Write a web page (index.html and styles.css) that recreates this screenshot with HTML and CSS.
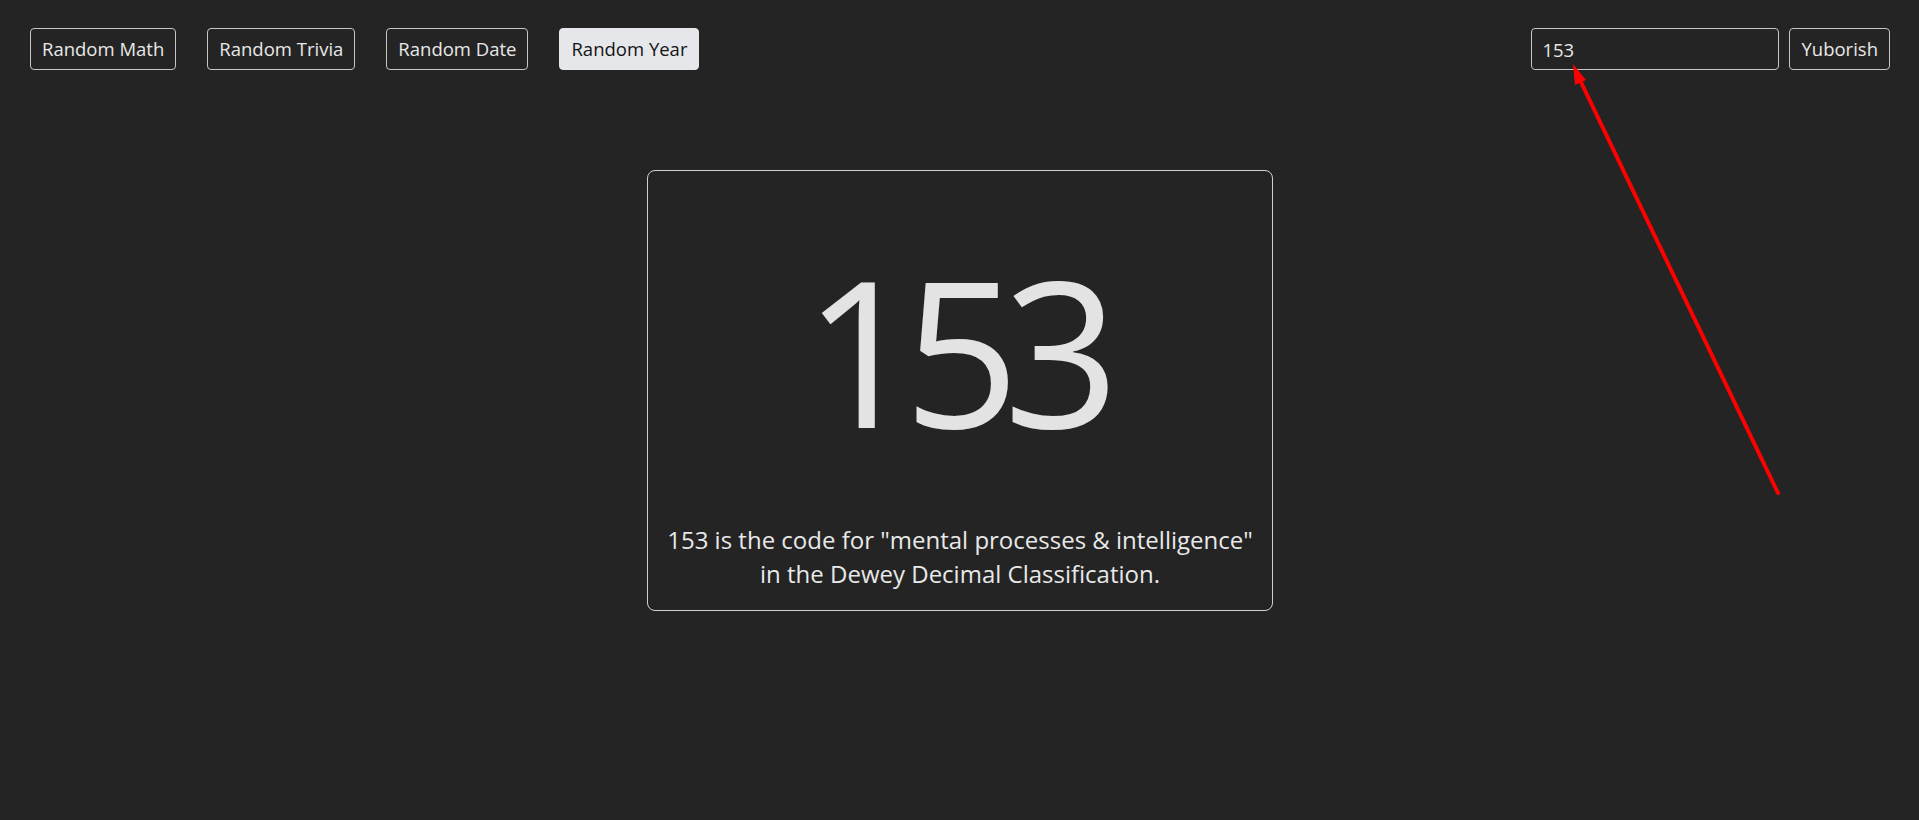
FILE: index.html
```html
<!DOCTYPE html>
<html lang="en">
<head>
<meta charset="utf-8">
<title>Numbers</title>
<link rel="stylesheet" href="styles.css">
</head>
<body>
<header class="top">
  <nav class="modes">
    <button class="btn">Random Math</button>
    <button class="btn">Random Trivia</button>
    <button class="btn">Random Date</button>
    <button class="btn active">Random Year</button>
  </nav>
  <form class="search">
    <input class="field" type="text" value="153">
    <button class="btn" type="button">Yuborish</button>
  </form>
</header>
<main class="main">
  <section class="card">
    <div class="number">153</div>
    <p class="fact">153 is the code for "mental processes &amp; intelligence" in the Dewey Decimal Classification.</p>
  </section>
</main>
<svg class="arrow" width="1919" height="820" viewBox="0 0 1919 820">
  <line x1="1778" y1="493" x2="1579" y2="78" stroke="#ff0000" stroke-width="4" stroke-linecap="round"/>
  <polygon points="1573,64 1586,80 1575,85" fill="#ff0000"/>
</svg>
</body>
</html>
```
FILE: styles.css
```css
html, body {
  margin: 0;
  padding: 0;
  background: #242424;
  height: 100%;
}
body {
  font-family: "Open Sans", "Noto Sans", sans-serif;
  color: #e6e6e6;
  position: relative;
  overflow: hidden;
}
.top {
  display: flex;
  justify-content: space-between;
  align-items: center;
  padding: 28px 29px 0 30px;
}
.modes {
  display: flex;
  gap: 31px;
}
.btn {
  font-family: inherit;
  font-size: 18.5px;
  line-height: 26px;
  height: 42px;
  padding: 0 11px;
  background: transparent;
  color: #e8e8e8;
  border: 1px solid #c6c6c6;
  border-radius: 4px;
  cursor: pointer;
}
.btn.active {
  background: #e6e7eb;
  color: #141414;
  border-color: #e6e7eb;
}
.search {
  display: flex;
  gap: 10px;
  margin: 0;
}
.field {
  font-family: inherit;
  font-size: 18.5px;
  width: 248px;
  height: 42px;
  box-sizing: border-box;
  padding: 0 10px;
  background: transparent;
  color: #e8e8e8;
  border: 1px solid #c6c6c6;
  border-radius: 4px;
  outline: none;
}
.main {
  padding: 100px 0 0 647px;
}
.card {
  width: 626px;
  height: 441px;
  box-sizing: border-box;
  border: 1px solid #d0d0d0;
  border-radius: 8px;
  display: flex;
  flex-direction: column;
  align-items: center;
  padding: 0 16px;
}
.number {
  font-size: 203px;
  line-height: 1;
  margin-top: 77px;
  margin-right: 13px;
  color: #e3e3e3;
  letter-spacing: -16px;
}
.fact {
  margin: auto 0 19px;
  text-align: center;
  font-size: 24px;
  line-height: 34px;
  color: #e8e8e8;
}
.arrow {
  position: absolute;
  left: 0;
  top: 0;
  pointer-events: none;
}
```
